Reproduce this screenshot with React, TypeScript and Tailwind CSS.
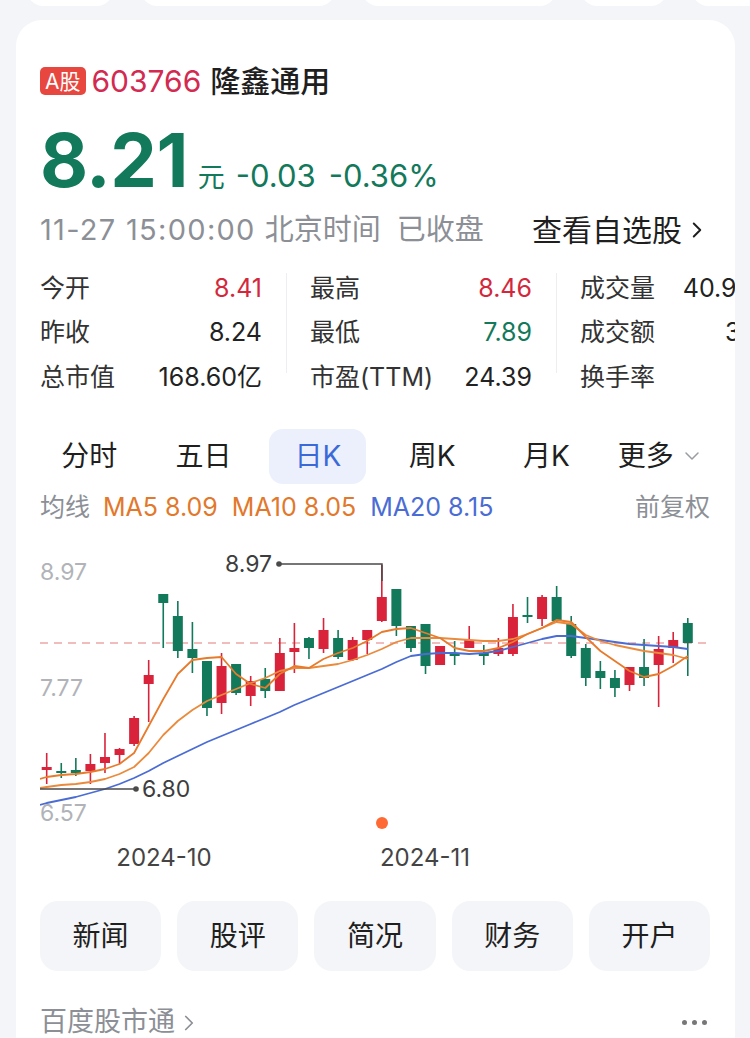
import { ChevronDown, ChevronRight } from "lucide-react";

const RED = "#d8233b";
const GREEN = "#12795b";

// [color, wickTop, bodyTop, bodyBottom, wickBottom] in page px
const candles: [string, number, number, number, number][] = [
  ["r", 752, 766, 769, 783],
  ["g", 762, 770, 772, 777],
  ["g", 757, 769, 772, 775],
  ["r", 753, 763, 770, 783],
  ["r", 732, 756, 762, 772],
  ["r", 747, 748, 754, 763],
  ["r", 715, 717, 743, 745],
  ["r", 659, 674, 683, 721],
  ["g", 593, 593, 602, 647],
  ["g", 600, 615, 650, 657],
  ["g", 621, 648, 657, 672],
  ["g", 660, 660, 707, 715],
  ["r", 652, 665, 702, 713],
  ["g", 663, 663, 692, 694],
  ["r", 675, 680, 695, 705],
  ["g", 667, 678, 690, 697],
  ["r", 637, 652, 690, 690],
  ["r", 622, 647, 651, 672],
  ["g", 636, 637, 647, 658],
  ["r", 617, 629, 648, 652],
  ["g", 629, 637, 656, 658],
  ["r", 636, 639, 659, 660],
  ["r", 629, 629, 639, 653],
  ["r", 564, 596, 620, 621],
  ["g", 588, 588, 625, 635],
  ["g", 625, 625, 647, 651],
  ["g", 623, 623, 665, 673],
  ["r", 645, 645, 664, 664],
  ["g", 640, 652, 655, 664],
  ["r", 625, 639, 647, 647],
  ["g", 644, 652, 655, 664],
  ["r", 637, 647, 653, 655],
  ["r", 603, 616, 653, 655],
  ["g", 596, 614, 616, 622],
  ["r", 594, 596, 618, 625],
  ["g", 585, 596, 620, 622],
  ["g", 615, 623, 655, 657],
  ["g", 643, 647, 677, 685],
  ["g", 660, 670, 677, 688],
  ["g", 669, 677, 687, 696],
  ["r", 666, 666, 684, 690],
  ["g", 638, 666, 677, 685],
  ["r", 635, 648, 664, 706],
  ["r", 631, 639, 647, 662],
  ["g", 617, 622, 642, 675],
];

const ma5 = [778, 776, 774, 773, 771, 768, 763, 752, 725, 698, 673, 659, 657, 656, 673, 683, 687, 673, 665, 667, 658, 652, 647, 640, 631, 628, 627, 632, 637, 647, 650, 650, 647, 641, 633, 627, 619, 621, 636, 650, 660, 670, 676, 673, 665, 655];
const ma10 = [787, 786, 784, 783, 781, 778, 773, 766, 752, 734, 720, 709, 700, 694, 688, 682, 677, 670, 667, 667, 665, 663, 659, 654, 648, 641, 637, 637, 637, 638, 639, 640, 640, 638, 633, 627, 621, 623, 634, 640, 644, 647, 650, 652, 654, 658];
const ma20 = [804, 802, 799, 796, 792, 788, 783, 777, 770, 762, 755, 748, 741, 735, 729, 723, 717, 711, 704, 698, 692, 686, 680, 674, 668, 661, 655, 653, 652, 652, 653, 652, 650, 646, 642, 638, 635, 635, 637, 639, 641, 643, 644, 645, 646, 648];

const cx = (i: number) => 46.7 + i * 14.57;

const line = (ys: number[]) =>
  ys.map((y, i) => `${i === 0 ? 40 : cx(i - 1).toFixed(1)},${y}`).join(" ");

const FONT = "Inter, 'Noto Sans CJK SC', sans-serif";

function KChart() {
  return (
    <svg width="670" height="325" viewBox="40 545 670 325" style={{ fontFamily: FONT }}>
      <text x="40" y="579" fontSize="23" fill="#b1b3b8">8.97</text>
      <text x="40" y="695" fontSize="23" fill="#b1b3b8">7.77</text>
      <text x="40" y="820" fontSize="23" fill="#b1b3b8">6.57</text>

      <line x1="40" y1="642" x2="710" y2="642" stroke="#eba6a6" strokeWidth="1.5" strokeDasharray="8 6" />

      {candles.map(([c, wt, bt, bb, wb], i) => {
        const col = c === "r" ? RED : GREEN;
        const x = cx(i);
        return (
          <g key={i}>
            <line x1={x} y1={wt} x2={x} y2={wb} stroke={col} strokeWidth="1.6" />
            <rect x={x - 5} y={bt} width="10" height={Math.max(bb - bt, 1.6)} fill={col} />
          </g>
        );
      })}

      <polyline points={line(ma20)} fill="none" stroke="#4a6cd4" strokeWidth="1.8" strokeLinejoin="round" />
      <polyline points={line(ma10)} fill="none" stroke="#ea8a3c" strokeWidth="1.8" strokeLinejoin="round" />
      <polyline points={line(ma5)} fill="none" stroke="#e87a2c" strokeWidth="1.8" strokeLinejoin="round" />

      {/* max marker */}
      <text x="272" y="571" fontSize="23" fill="#3d3d3d" textAnchor="end">8.97</text>
      <circle cx="279" cy="563" r="2.8" fill="#4a4a4a" />
      <polyline points="279,563 382,563 382,580" fill="none" stroke="#4a4a4a" strokeWidth="1.5" />

      {/* min marker */}
      <polyline points="40,788 136,788" fill="none" stroke="#4a4a4a" strokeWidth="1.5" />
      <circle cx="136" cy="788" r="2.8" fill="#4a4a4a" />
      <text x="142" y="796" fontSize="23" fill="#3d3d3d">6.80</text>

      <circle cx="382" cy="822" r="6" fill="#ff6a34" />

      <text x="164" y="865" fontSize="24" fill="#444" textAnchor="middle">2024-10</text>
      <text x="425" y="865" fontSize="24" fill="#444" textAnchor="middle">2024-11</text>
    </svg>
  );
}

const stats = [
  [
    ["今开", "8.41", "text-[#d3283c]"],
    ["昨收", "8.24", "text-[#222]"],
    ["总市值", "168.60亿", "text-[#222]"],
  ],
  [
    ["最高", "8.46", "text-[#d3283c]"],
    ["最低", "7.89", "text-[#12795b]"],
    ["市盈(TTM)", "24.39", "text-[#222]"],
  ],
  [
    ["成交量", "40.93万手", "text-[#222]"],
    ["成交额", "3.35亿", "text-[#222]"],
    ["换手率", "0.5%", "text-[#222]"],
  ],
];

const tabs = ["分时", "五日", "日K", "周K", "月K"];
const actions = ["新闻", "股评", "简况", "财务", "开户"];

export default function App() {
  return (
    <div className="h-[1038px] w-[750px] overflow-hidden bg-[#f4f5f9] font-[Inter,'Noto_Sans_CJK_SC',sans-serif]">
      {/* cards above, scrolled out */}
      <div className="flex h-[6px] items-end overflow-hidden">
        <div className="ml-[27px] h-[30px] w-[88px] rounded-b-[16px] bg-white" />
        <div className="ml-[28px] h-[30px] w-[200px] rounded-b-[16px] bg-white" />
        <div className="ml-[27px] h-[30px] w-[200px] rounded-b-[16px] bg-white" />
        <div className="ml-[25px] h-[30px] w-[88px] rounded-b-[16px] bg-white" />
        <div className="ml-[25px] h-[30px] w-[60px] rounded-bl-[16px] bg-white" />
      </div>

      <div className="ml-[16px] mt-[14px] w-[719px] overflow-hidden rounded-t-[26px] bg-white pl-[24px] pr-[25px] pt-[41px]">
        {/* title */}
        <div className="flex h-[40px] items-center">
          <span className="flex h-[28px] items-center rounded-[5px] bg-[#e8473f] px-[5px] text-[21px] leading-none text-white">
            A股
          </span>
          <span className="ml-[6px] text-[30px] leading-none text-[#d22a50]">603766</span>
          <span className="ml-[9px] text-[30px] font-medium leading-none text-[#1f1f1f]">隆鑫通用</span>
        </div>

        {/* price */}
        <div className="mt-[21px] flex h-[76px] items-baseline text-[#12795b]">
          <span className="text-[74px] font-bold leading-[76px] tracking-[-0.5px]">8.21</span>
          <span className="ml-[10px] text-[27px]">元</span>
          <span className="ml-[11px] text-[31px]">-0.03</span>
          <span className="ml-[13px] text-[31px]">-0.36%</span>
        </div>

        {/* time */}
        <div className="mt-[14px] flex h-[36px] items-center justify-between">
          <span className="flex items-center text-[29px] text-[#8c8f96]">
            <span className="tracking-[1.3px]">11-27 15:00:00</span>
            <span className="ml-[9px]">北京时间</span>
            <span className="ml-[16px]">已收盘</span>
          </span>
          <span className="flex items-center text-[30px] text-[#1f1f1f]">
            查看自选股
            <ChevronRight className="ml-[2px] h-[26px] w-[26px]" strokeWidth={1.8} />
          </span>
        </div>

        {/* stats */}
        <div className="mt-[18px] flex w-[800px]">
          {stats.map((col, ci) => (
            <div key={ci} className="flex">
              {ci > 0 && (
                <div className="flex w-[48px] justify-center">
                  <div className="mt-[7px] h-[100px] w-px bg-[#eceef2]" />
                </div>
              )}
              <div className="w-[222px]">
                {col.map(([k, v, c]) => (
                  <div key={k} className="flex h-[44.5px] items-center justify-between text-[25px]">
                    <span className="text-[#333]">{k}</span>
                    <span className={c}>{v}</span>
                  </div>
                ))}
              </div>
            </div>
          ))}
        </div>

        {/* tabs */}
        <div className="-mx-[8px] mt-[29px] grid h-[55px] grid-cols-6 items-center text-[28px] text-[#1f1f1f]">
          {tabs.map((t) => (
            <div key={t} className="flex justify-center">
              {t === "日K" ? (
                <span className="flex h-[55px] w-[97px] items-center justify-center rounded-[14px] bg-[#ebf0fc] text-[#3b6ad8]">
                  {t}
                </span>
              ) : (
                <span>{t}</span>
              )}
            </div>
          ))}
          <div className="flex items-center justify-center">
            更多
            <ChevronDown className="ml-[6px] h-[24px] w-[24px] text-[#9a9ca2]" strokeWidth={1.5} />
          </div>
        </div>

        {/* MA legend */}
        <div className="mt-[8px] flex h-[32px] items-center justify-between text-[25px]">
          <div className="flex items-center">
            <span className="text-[#8c8f96]">均线</span>
            <span className="ml-[13px] text-[#e2782b]">MA5 8.09</span>
            <span className="ml-[14px] text-[#e2782b]">MA10 8.05</span>
            <span className="ml-[14px] text-[#4a6cd4]">MA20 8.15</span>
          </div>
          <span className="text-[25px] text-[#8c8f96]">前复权</span>
        </div>

        {/* chart */}
        <div className="mt-[22px] h-[325px]">
          <KChart />
        </div>

        {/* actions */}
        <div className="mt-[30px] grid grid-cols-5 gap-[16px]">
          {actions.map((a) => (
            <div
              key={a}
              className="flex h-[70px] items-center justify-center rounded-[18px] bg-[#f4f5f8] text-[28px] text-[#1f1f1f]"
            >
              {a}
            </div>
          ))}
        </div>

        {/* footer */}
        <div className="mt-[32px] flex h-[40px] items-center justify-between">
          <span className="flex items-center text-[27px] text-[#8c8f96]">
            百度股市通
            <ChevronRight className="ml-[1px] h-[26px] w-[26px]" strokeWidth={1.6} />
          </span>
          <span className="mr-[3px] flex gap-[5px]">
            <span className="h-[5px] w-[5px] rounded-full bg-[#777]" />
            <span className="h-[5px] w-[5px] rounded-full bg-[#777]" />
            <span className="h-[5px] w-[5px] rounded-full bg-[#777]" />
          </span>
        </div>
      </div>
    </div>
  );
}
